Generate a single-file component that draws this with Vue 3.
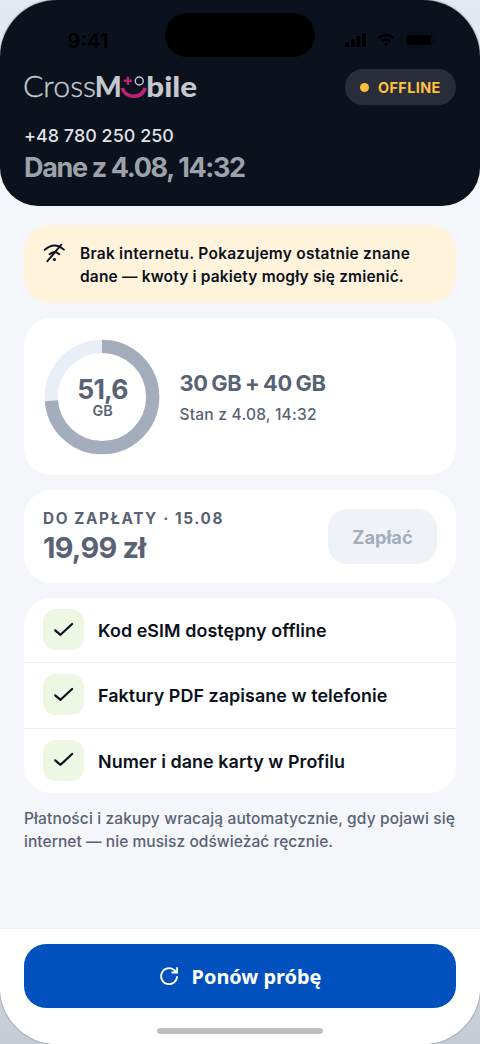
<script setup>
const features = [
  'Kod eSIM dostępny offline',
  'Faktury PDF zapisane w telefonie',
  'Numer i dane karty w Profilu',
]
const ringRadius = 50.7
const circumference = 2 * Math.PI * ringRadius
const dash = `${circumference * 0.737} ${circumference}`
</script>

<template>
  <main class="stage">
    <div class="phone">
      <header class="header">
        <div class="status">
          <span class="clock">9:41</span>
          <span class="island"></span>
          <svg class="signals" width="92" height="18" viewBox="0 0 92 18">
            <rect x="1" y="11" width="4" height="5" rx="1" />
            <rect x="6.7" y="8.3" width="4" height="7.7" rx="1" />
            <rect x="12.4" y="5" width="4" height="11" rx="1" />
            <rect x="18" y="2" width="4" height="14" rx="1" />
            <g fill="none" stroke="#000" stroke-width="2.5">
              <path d="M34.5 7.1Q42 .9 49.5 7.1M37.5 10.4Q42 6.8 46.5 10.4" />
            </g>
            <path d="M39.5 12.6Q42 10.9 44.5 12.6L42 15.5Z" />
            <rect x="61.5" y="2.5" width="27" height="13" rx="4" fill="none" stroke="#070c15" />
            <rect x="63" y="4" width="24" height="10" rx="2.5" />
            <path d="M90 7.5q2 2 0 4z" fill="#070c15" />
          </svg>
        </div>
        <div class="brand">
          <svg class="logo" width="180" height="40" viewBox="0 0 180 40" role="img" aria-label="CrossMobile">
            <text class="thin" x="-1" y="29.7" textLength="73" lengthAdjust="spacingAndGlyphs">Cross</text>
            <text class="thick" x="70.7" y="29.7" textLength="27" lengthAdjust="spacingAndGlyphs">M</text>
            <path d="M99.9 13.7H107.9M103.9 9.7V17.7" stroke="#bd2272" stroke-width="2.4" />
            <circle cx="115.3" cy="14" r="4" fill="none" stroke="#c5c8cd" stroke-width="1.4" />
            <path d="M98.2 21C102 32 117.3 32 121.3 21" fill="none" stroke="#bd2272" stroke-width="3.7" />
            <text class="thick" x="122.3" y="29.7" textLength="50.8" lengthAdjust="spacingAndGlyphs">bile</text>
          </svg>
          <div class="badge"><i></i><span>OFFLINE</span></div>
        </div>
        <div class="number">+48 780 250 250</div>
        <h1>Dane z 4.08, 14:32</h1>
      </header>

      <section class="content">
        <div class="alert">
          <svg width="24" height="24" viewBox="0 0 24 24" fill="none" stroke="#0b111c" stroke-width="1.9" stroke-linecap="round" stroke-linejoin="round">
            <path d="M1.9 7.8Q11.3 -.6 20.9 7.6M6.6 12.2Q11.5 7.6 16.3 12.2M4.4 19.2L18.3 2.7" />
            <circle cx="11.4" cy="17.5" r="1.6" fill="#0b111c" stroke="none" />
          </svg>
          <p><span class="a1">Brak internetu. Pokazujemy ostatnie znane</span><br><span class="a2">dane — kwoty i pakiety mogły się zmienić.</span></p>
        </div>

        <div class="card usage">
          <div class="ring">
            <svg width="116" height="116" viewBox="0 0 116 116">
              <g fill="none" stroke-width="13.2" transform="rotate(-90 58 58)">
                <circle cx="58" cy="58" :r="ringRadius" stroke="#e9eef7" />
                <circle cx="58" cy="58" :r="ringRadius" stroke="#a3adbc" :stroke-dasharray="dash" />
              </g>
            </svg>
            <div class="amount"><strong>51,6</strong><span>GB</span></div>
          </div>
          <div class="plan"><strong>30 GB + 40 GB</strong><span>Stan z 4.08, 14:32</span></div>
        </div>

        <div class="card payment">
          <div><div class="due">DO ZAPŁATY · 15.08</div><div class="price">19,99 zł</div></div>
          <button class="pay" disabled><span>Zapłać</span></button>
        </div>

        <div class="card features">
          <div v-for="feature in features" :key="feature" class="feature">
            <span class="check">
              <svg width="24" height="24" viewBox="0 0 24 24" fill="none" stroke="#0b111c" stroke-width="2.2" stroke-linecap="round" stroke-linejoin="round">
                <path d="M3.2 12.3L8.5 16.8L20.1 6" />
              </svg>
            </span>
            <span class="label">{{ feature }}</span>
          </div>
        </div>

        <p class="note"><span class="n1">Płatności i zakupy wracają automatycznie, gdy pojawi się</span><br><span class="n2">internet — nie musisz odświeżać ręcznie.</span></p>
      </section>

      <footer>
        <button class="retry">
          <svg width="20" height="20" viewBox="0 0 20 20" fill="none" stroke="#fff" stroke-width="1.8">
            <path d="M18.1 10.3A8 8 0 1 1 15.2 4L17.4 6.2M18.1 1.2V6.5H12.5" />
          </svg>
          <span>Ponów próbę</span>
        </button>
        <i class="home"></i>
      </footer>
    </div>
  </main>
</template>

<style>
body { margin: 0; }
</style>

<style scoped>
* { box-sizing: border-box; }
.stage { width: 480px; height: 1044px; overflow: hidden; background: linear-gradient(180deg, #e3e8f1 0%, #e0e4eb 80%, #c6ccd5 100%); font-family: Inter, sans-serif; color: #0b111c; }
.phone { width: 480px; height: 1044px; display: flex; flex-direction: column; overflow: hidden; border-radius: 57px; background: #f4f6fa; box-shadow: 0 0 2px #606773; }
p, h1 { margin: 0; }
button { border: 0; font-family: inherit; padding: 0; }
span { white-space: nowrap; }
.header { height: 206px; flex: none; padding: 0 24px; background: #0b121e; border-radius: 0 0 38px 38px; }
.status { height: 67px; display: grid; grid-template-columns: 141px 150px 141px; align-items: start; }
.clock { color: #000; margin: 29px 0 0 43.5px; font-size: 20.3px; line-height: 24px; font-weight: 600; }
.island { height: 44px; margin-top: 13px; border-radius: 22px; background: #000; }
.signals { margin: 31px 0 0 29px; }
.brand { height: 40px; display: flex; align-items: center; justify-content: space-between; }
.logo { overflow: visible; }
.logo text { font-family: Lato, sans-serif; font-size: 29px; fill: #c5c8cd; }
.logo .thin { font-weight: 300; stroke: #c5c8cd; stroke-width: .35px; }
.logo .thick { font-weight: 900; }
.badge { width: 111px; height: 36px; display: flex; align-items: center; padding-left: 15px; gap: 9px; border-radius: 18px; background: #292d3a; color: #ffc03e; font-size: 14.4px; font-weight: 700; letter-spacing: .4px; }
.badge i { width: 9px; height: 9px; border-radius: 50%; background: #ffba3d; }
.number { margin-top: 17px; line-height: 24px; font-size: 17.9px; font-weight: 500; letter-spacing: .04px; color: #dfe1e5; }
h1 { margin-top: 2px; line-height: 36px; font-size: 27px; font-weight: 700; letter-spacing: -1.35px; color: #9da2aa; white-space: nowrap; }
.content { flex: 1; padding: 19px 24px 0; }
.alert { height: 78px; display: flex; gap: 13px; padding: 18px 19px; border-radius: 27px; background: #fff3dc; font-size: 15.5px; line-height: 22.7px; font-weight: 600; }
.a1 { letter-spacing: .25px; }
.a2 { letter-spacing: .16px; }
.alert svg { flex: none; margin-top: -1px; }
.card { background: #fff; border-radius: 27px; }
.usage { margin-top: 15px; height: 157px; display: flex; align-items: center; padding: 0 0 0 20px; gap: 19.5px; color: #596274; }
.ring { width: 116px; height: 116px; display: grid; }
.ring > * { grid-area: 1 / 1; }
.amount { display: flex; flex-direction: column; align-items: center; justify-content: center; padding: 0 0 0 1px; }
.amount strong { font-size: 26.5px; line-height: 27px; letter-spacing: -.8px; }
.amount span { font-size: 14.3px; line-height: 15px; font-weight: 600; }
.plan { display: flex; flex-direction: column; gap: 6px; padding-top: 3px; }
.plan strong { font-size: 21.8px; line-height: 27px; letter-spacing: -.3px; word-spacing: -1.3px; white-space: nowrap; }
.plan span { font-size: 15.5px; line-height: 24px; font-weight: 500; letter-spacing: .23px; }
.payment { margin-top: 15px; height: 93px; padding: 0 19px; display: flex; align-items: center; justify-content: space-between; color: #596274; }
.due { padding-top: 1px; font-size: 15.3px; line-height: 20px; font-weight: 700; letter-spacing: 1.61px; }
.price { margin-top: 2px; font-size: 28.8px; line-height: 34px; font-weight: 700; letter-spacing: -.7px; }
.pay { width: 109px; height: 55px; border-radius: 19px; background: #eff3f8; color: #a3adbc; font-size: 18.2px; font-weight: 700; }
.features { margin-top: 15px; height: 195px; }
.feature { height: 65.5px; display: flex; align-items: center; gap: 14px; padding: 0 19px 1px; font-size: 17.9px; font-weight: 600; letter-spacing: .065px; }
.label { padding-top: 2px; }
.feature:first-child { height: 64px; }
.feature + .feature { border-top: 1px solid #edf0f4; }
.check { width: 41px; height: 41px; display: grid; place-items: center; border-radius: 13px; background: #edf7e4; }
.note { margin-top: 14px; color: #596274; font-size: 15.5px; line-height: 23px; font-weight: 500; }
.n1 { letter-spacing: .125px; }
.n2 { letter-spacing: .06px; }
footer { height: 116px; flex: none; border-top: 1px solid #eaedf2; background: #fff; padding: 15px 24px 0; display: flex; flex-direction: column; align-items: center; }
.retry { width: 432px; height: 64px; flex: none; display: flex; align-items: center; justify-content: center; gap: 13px; border-radius: 22px; background: #0050bd; color: #fff; font-family: "Noto Sans", sans-serif; font-size: 19.9px; font-weight: 700; }
.home { width: 166px; height: 6px; margin-top: 20px; border-radius: 3px; background: #bfbfbf; }
</style>
